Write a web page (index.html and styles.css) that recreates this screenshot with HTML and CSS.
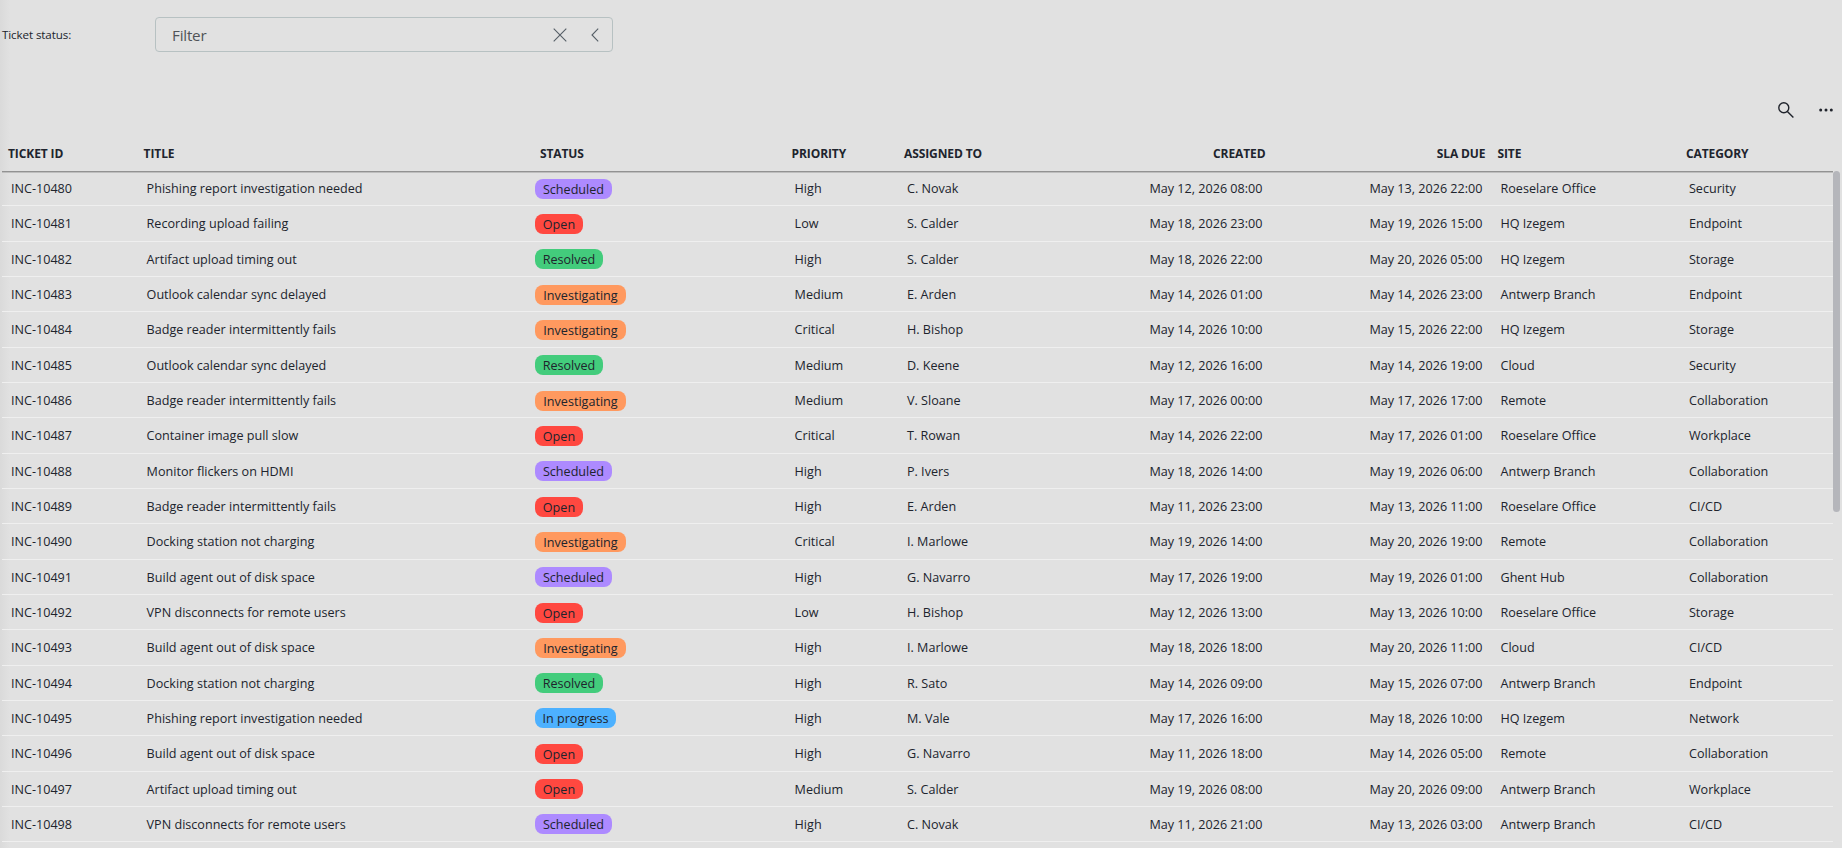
FILE: index.html
```html
<!DOCTYPE html>
<html lang="en">
<head>
<meta charset="utf-8">
<title>Tickets</title>
<link rel="stylesheet" href="styles.css">
</head>
<body>
<div class="page">
<div class="filter-bar">
<label class="filter-label">Ticket status:</label>
<div class="filter-box">
<span class="filter-text">Filter</span>
<svg class="icon-clear" viewBox="0 0 14 14"><path d="M.7.7 13.3 13.3M13.3.7.7 13.3"/></svg>
<svg class="icon-chevron" viewBox="0 0 8 14"><path d="M7.2.7 1 7l6.2 6.3"/></svg>
</div>
</div>
<div class="toolbar">
<svg class="icon-search" viewBox="0 0 16 16"><circle cx="5.8" cy="5.8" r="5"/><path d="m9.4 9.4 6 6"/></svg>
<svg class="icon-more" viewBox="0 0 14 4"><circle cx="1.7" cy="2" r="1.5"/><circle cx="7" cy="2" r="1.5"/><circle cx="12.3" cy="2" r="1.5"/></svg>
</div>
<div class="grid">
<div class="row head"><span>TICKET ID</span><span>TITLE</span><span>STATUS</span><span>PRIORITY</span><span>ASSIGNED TO</span><span class="num">CREATED</span><span class="num">SLA DUE</span><span>SITE</span><span>CATEGORY</span></div>
<div class="body">
<div class="rows">
<div class="row"><span>INC-10480</span><span>Phishing report investigation needed</span><span class="st"><b class="badge scheduled">Scheduled</b></span><span>High</span><span>C. Novak</span><span class="num">May 12, 2026 08:00</span><span class="num">May 13, 2026 22:00</span><span>Roeselare Office</span><span>Security</span></div>
<div class="row"><span>INC-10481</span><span>Recording upload failing</span><span class="st"><b class="badge open">Open</b></span><span>Low</span><span>S. Calder</span><span class="num">May 18, 2026 23:00</span><span class="num">May 19, 2026 15:00</span><span>HQ Izegem</span><span>Endpoint</span></div>
<div class="row"><span>INC-10482</span><span>Artifact upload timing out</span><span class="st"><b class="badge resolved">Resolved</b></span><span>High</span><span>S. Calder</span><span class="num">May 18, 2026 22:00</span><span class="num">May 20, 2026 05:00</span><span>HQ Izegem</span><span>Storage</span></div>
<div class="row"><span>INC-10483</span><span>Outlook calendar sync delayed</span><span class="st"><b class="badge investigating">Investigating</b></span><span>Medium</span><span>E. Arden</span><span class="num">May 14, 2026 01:00</span><span class="num">May 14, 2026 23:00</span><span>Antwerp Branch</span><span>Endpoint</span></div>
<div class="row"><span>INC-10484</span><span>Badge reader intermittently fails</span><span class="st"><b class="badge investigating">Investigating</b></span><span>Critical</span><span>H. Bishop</span><span class="num">May 14, 2026 10:00</span><span class="num">May 15, 2026 22:00</span><span>HQ Izegem</span><span>Storage</span></div>
<div class="row"><span>INC-10485</span><span>Outlook calendar sync delayed</span><span class="st"><b class="badge resolved">Resolved</b></span><span>Medium</span><span>D. Keene</span><span class="num">May 12, 2026 16:00</span><span class="num">May 14, 2026 19:00</span><span>Cloud</span><span>Security</span></div>
<div class="row"><span>INC-10486</span><span>Badge reader intermittently fails</span><span class="st"><b class="badge investigating">Investigating</b></span><span>Medium</span><span>V. Sloane</span><span class="num">May 17, 2026 00:00</span><span class="num">May 17, 2026 17:00</span><span>Remote</span><span>Collaboration</span></div>
<div class="row"><span>INC-10487</span><span>Container image pull slow</span><span class="st"><b class="badge open">Open</b></span><span>Critical</span><span>T. Rowan</span><span class="num">May 14, 2026 22:00</span><span class="num">May 17, 2026 01:00</span><span>Roeselare Office</span><span>Workplace</span></div>
<div class="row"><span>INC-10488</span><span>Monitor flickers on HDMI</span><span class="st"><b class="badge scheduled">Scheduled</b></span><span>High</span><span>P. Ivers</span><span class="num">May 18, 2026 14:00</span><span class="num">May 19, 2026 06:00</span><span>Antwerp Branch</span><span>Collaboration</span></div>
<div class="row"><span>INC-10489</span><span>Badge reader intermittently fails</span><span class="st"><b class="badge open">Open</b></span><span>High</span><span>E. Arden</span><span class="num">May 11, 2026 23:00</span><span class="num">May 13, 2026 11:00</span><span>Roeselare Office</span><span>CI/CD</span></div>
<div class="row"><span>INC-10490</span><span>Docking station not charging</span><span class="st"><b class="badge investigating">Investigating</b></span><span>Critical</span><span>I. Marlowe</span><span class="num">May 19, 2026 14:00</span><span class="num">May 20, 2026 19:00</span><span>Remote</span><span>Collaboration</span></div>
<div class="row"><span>INC-10491</span><span>Build agent out of disk space</span><span class="st"><b class="badge scheduled">Scheduled</b></span><span>High</span><span>G. Navarro</span><span class="num">May 17, 2026 19:00</span><span class="num">May 19, 2026 01:00</span><span>Ghent Hub</span><span>Collaboration</span></div>
<div class="row"><span>INC-10492</span><span>VPN disconnects for remote users</span><span class="st"><b class="badge open">Open</b></span><span>Low</span><span>H. Bishop</span><span class="num">May 12, 2026 13:00</span><span class="num">May 13, 2026 10:00</span><span>Roeselare Office</span><span>Storage</span></div>
<div class="row"><span>INC-10493</span><span>Build agent out of disk space</span><span class="st"><b class="badge investigating">Investigating</b></span><span>High</span><span>I. Marlowe</span><span class="num">May 18, 2026 18:00</span><span class="num">May 20, 2026 11:00</span><span>Cloud</span><span>CI/CD</span></div>
<div class="row"><span>INC-10494</span><span>Docking station not charging</span><span class="st"><b class="badge resolved">Resolved</b></span><span>High</span><span>R. Sato</span><span class="num">May 14, 2026 09:00</span><span class="num">May 15, 2026 07:00</span><span>Antwerp Branch</span><span>Endpoint</span></div>
<div class="row"><span>INC-10495</span><span>Phishing report investigation needed</span><span class="st"><b class="badge progress">In progress</b></span><span>High</span><span>M. Vale</span><span class="num">May 17, 2026 16:00</span><span class="num">May 18, 2026 10:00</span><span>HQ Izegem</span><span>Network</span></div>
<div class="row"><span>INC-10496</span><span>Build agent out of disk space</span><span class="st"><b class="badge open">Open</b></span><span>High</span><span>G. Navarro</span><span class="num">May 11, 2026 18:00</span><span class="num">May 14, 2026 05:00</span><span>Remote</span><span>Collaboration</span></div>
<div class="row"><span>INC-10497</span><span>Artifact upload timing out</span><span class="st"><b class="badge open">Open</b></span><span>Medium</span><span>S. Calder</span><span class="num">May 19, 2026 08:00</span><span class="num">May 20, 2026 09:00</span><span>Antwerp Branch</span><span>Workplace</span></div>
<div class="row"><span>INC-10498</span><span>VPN disconnects for remote users</span><span class="st"><b class="badge scheduled">Scheduled</b></span><span>High</span><span>C. Novak</span><span class="num">May 11, 2026 21:00</span><span class="num">May 13, 2026 03:00</span><span>Antwerp Branch</span><span>CI/CD</span></div>
</div>
<div class="scrollbar"></div>
</div>
</div>
</div>
</body>
</html>
```
FILE: styles.css
```css
* { box-sizing: border-box; }
body {
  margin: 0;
  background: #e1e1e1;
  color: #20242d;
  font-family: "Segoe UI", "Open Sans", "Noto Sans", sans-serif;
  font-size: 12.6px;
}
.page {
  height: 848px;
  padding-left: 2px;
  overflow: hidden;
  background: linear-gradient(90deg, #dadada, #e1e1e1 10px);
}
.filter-bar {
  display: flex;
  align-items: center;
  height: 86px;
  padding: 17px 0 34px;
}
.filter-label { width: 153px; font-size: 11.6px; letter-spacing: -.1px; }
.filter-box {
  display: flex;
  align-items: center;
  width: 458px;
  height: 35px;
  padding: 0 13px 0 16px;
  border: 1px solid #b7c1c2;
  border-radius: 4px;
  color: #505358;
}
.filter-text { flex: 1; padding-top: 1px; font-size: 15.2px; letter-spacing: -.2px; }
svg { fill: none; stroke: #555e66; stroke-width: 1.1; }
.icon-clear { width: 14px; height: 14px; margin-right: 24px; }
.icon-chevron { width: 8px; height: 14px; }
.toolbar {
  display: flex;
  justify-content: flex-end;
  align-items: center;
  gap: 25px;
  height: 49px;
  padding: 0 9px 1px 0;
}
.icon-search { width: 16px; height: 16px; stroke: #20242c; stroke-width: 1.4; }
.icon-more { width: 14px; height: 4px; fill: #20242c; stroke: none; }
.row {
  display: grid;
  grid-template-columns: 135.6px 396.4px 251.6px 112.4px 153px 220.5px 220px 188.5px 153px;
  align-items: center;
  width: 1831px;
  height: 35.333px;
  padding-top: .8px;
  border-bottom: 1px solid #efefef;
}
.row span { padding: 0 9px; white-space: nowrap; }
.row .num { text-align: right; }
.row .st { display: flex; padding: 0 1px; }
.head {
  position: relative;
  height: 36px;
  padding-top: 0;
  border: 0;
  box-shadow: 0 1px #929292, 0 2px #bebebe;
  font-size: 12px;
  font-weight: 700;
  letter-spacing: -.1px;
}
.head span, .head .num { padding: 0 6px; }
.body { display: flex; }
.scrollbar { width: 7px; height: 341px; border-radius: 3.5px; background: #b5b6bb; }
.badge {
  height: 20px;
  border-radius: 8px;
  font-weight: 400;
  line-height: 21px;
  text-align: center;
}
.scheduled { width: 77px; background: #ad8aff; }
.open { width: 48px; background: #ff4840; }
.resolved { width: 68px; background: #43cc7c; }
.investigating { width: 91px; background: #ff995f; }
.progress { width: 81px; background: #4db1ff; }
```
